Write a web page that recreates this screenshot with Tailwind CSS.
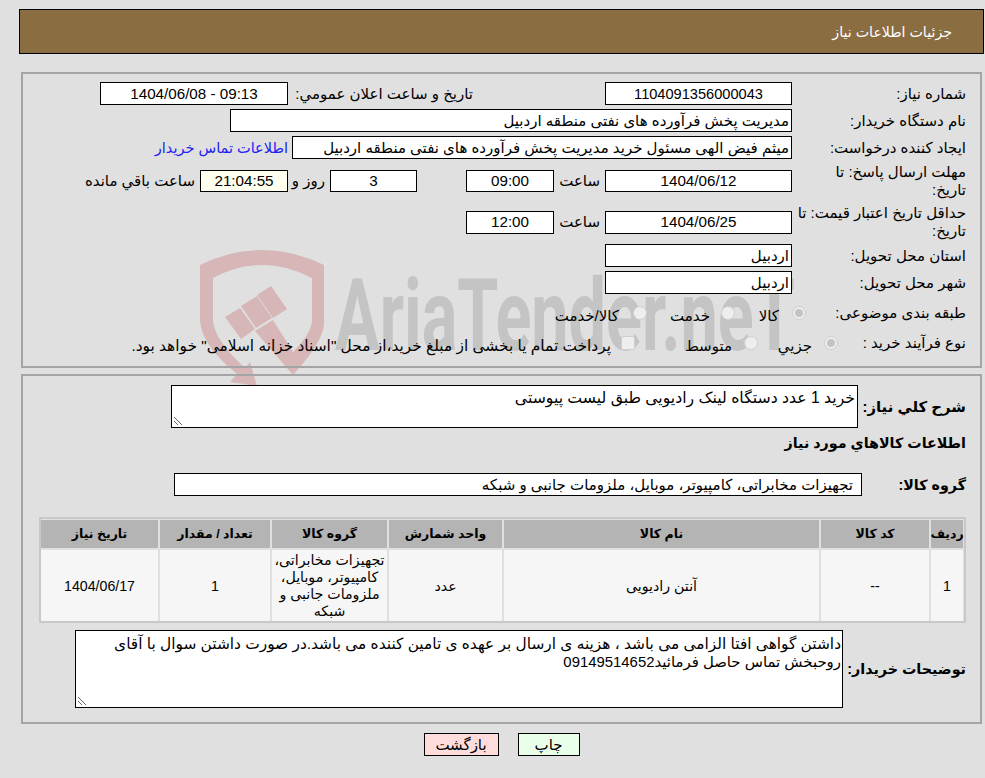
<!DOCTYPE html>
<html lang="fa" dir="rtl">
  <head>
    <meta charset="UTF-8" />
    <script src="https://cdn.jsdelivr.net/npm/@tailwindcss/browser@4"></script>
  </head>
  <body class="relative h-[778px] overflow-hidden bg-[#e0e0e0] text-[15px] leading-[18px] text-black font-['Liberation_Sans','DejaVu_Sans',sans-serif]">
    <!-- watermark -->
    <svg class="absolute left-[199px] top-[245px] z-0" width="130" height="145" viewBox="199 245 130 145">
      <path fill="#d6b6b6" d="M200 265 Q231 250 262 250 Q293 250 324 265 V325 Q322 343 293 375 V352 Q310 335 312 322 V278 Q288 265 262 265 Q236 265 213 278 V320 Q214 340 245 368 L250 362 L257 386 L230 382 L237 374 Q201 345 200 320 Z" />
      <path fill="#d6b6b6" d="M225 317 L240 308 L255 329 L241 339 Z M241 306 L257 296 L272 318 L256 328 Z M257 295 L271 286 L287 309 L273 318 Z M255 331 L273 320 L293 352 V375 Z" />
    </svg>
    <div class="absolute left-[335px] top-[256px] z-0 origin-top-left scale-x-[.665] whitespace-nowrap text-[100px] leading-[120px] font-bold text-[#c4c4c4] font-['Roboto',sans-serif]" dir="ltr">AriaTender.neT</div>

    <div class="relative z-10 pt-[9px] pr-[1px] pl-[19px]">
      <header class="flex h-[45px] items-center border border-black bg-[#8b6d42] pr-[31px] text-[14.2px] text-white">جزئيات اطلاعات نياز</header>

      <section class="mt-[18px] mx-[2px] h-[296px] border-2 border-[#a4a4a4] pt-[8px] pr-[14px]">
        <div class="flex h-[23px] items-center">
          <label class="w-[174px]">شماره نياز:</label>
          <div class="flex h-[23px] w-[187px] items-center justify-center border border-black bg-white text-[14.6px]">1104091356000043</div>
          <label class="mr-[132px] w-[185px] whitespace-nowrap">تاريخ و ساعت اعلان عمومي:</label>
          <div class="flex h-[23px] w-[188px] items-center justify-center border border-black bg-white text-[15.2px]" dir="ltr">1404/06/08 - 09:13</div>
        </div>
        <div class="mt-[4px] flex h-[23px] items-center">
          <label class="w-[174px]">نام دستگاه خريدار:</label>
          <div class="flex h-[23px] w-[562px] items-center border border-black bg-white pr-[2px]">مدیریت پخش فرآورده های نفتی منطقه اردبیل</div>
        </div>
        <div class="mt-[4px] flex h-[23px] items-center">
          <label class="w-[174px]">ايجاد کننده درخواست:</label>
          <div class="flex h-[23px] w-[500px] items-center whitespace-nowrap border border-black bg-white pr-[2px]">میثم فیض الهی مسئول خرید مدیریت پخش فرآورده های نفتی منطقه اردبیل</div>
          <a class="mr-[4px] whitespace-nowrap text-[14.5px] text-[#2020f0]">اطلاعات تماس خريدار</a>
        </div>
        <div class="mt-[4px] flex h-[36px] items-center">
          <label class="w-[174px]">مهلت ارسال پاسخ: تا<br />تاريخ:</label>
          <div class="flex h-[22px] w-[187px] items-center justify-center border border-black bg-white text-[15.2px]">1404/06/12</div>
          <span class="w-[51px] pr-[5px]">ساعت</span>
          <div class="flex h-[22px] w-[88px] items-center justify-center border border-black bg-white text-[15.2px]">09:00</div>
          <div class="mr-[49px] flex h-[22px] w-[87px] items-center justify-center border border-black bg-white text-[15.2px]">3</div>
          <span class="w-[42px] pr-[5px]">روز و</span>
          <div class="flex h-[22px] w-[88px] items-center justify-center border border-black bg-[#fffff0] text-[15.2px]">21:04:55</div>
          <span class="whitespace-nowrap pr-[5px]">ساعت باقي مانده</span>
        </div>
        <div class="mt-[5px] flex h-[36px] items-center">
          <label class="w-[174px] whitespace-nowrap">حداقل تاريخ اعتبار قيمت: تا<br />تاريخ:</label>
          <div class="flex h-[23px] w-[187px] items-center justify-center border border-black bg-white text-[15.2px]">1404/06/25</div>
          <span class="w-[51px] pr-[5px]">ساعت</span>
          <div class="flex h-[23px] w-[88px] items-center justify-center border border-black bg-white text-[15.2px]">12:00</div>
        </div>
        <div class="mt-[4px] flex h-[23px] items-center">
          <label class="w-[174px]">استان محل تحويل:</label>
          <div class="flex h-[23px] w-[187px] items-center border border-black bg-white pr-[2px]">اردبیل</div>
        </div>
        <div class="mt-[4px] flex h-[23px] items-center">
          <label class="w-[174px]">شهر محل تحويل:</label>
          <div class="flex h-[23px] w-[187px] items-center border border-black bg-white pr-[2px]">اردبیل</div>
        </div>
        <div class="mt-[8px] flex h-[22px] items-center">
          <label class="w-[160px] whitespace-nowrap">طبقه بندی موضوعی:</label>
          <span class="flex h-[14px] w-[14px] shrink-0 items-center justify-center rounded-full border border-[#cfcfcf] bg-[#eeeeee]"><span class="h-[8px] w-[8px] rounded-full bg-[#c4c4c4]"></span></span>
          <span class="mr-[13px] w-[44px] pt-[5px]">کالا</span>
          <span class="h-[14px] w-[14px] shrink-0 rounded-full border border-[#cfcfcf] bg-[#eeeeee]"></span>
          <span class="mr-[11px] w-[63px] pt-[5px]">خدمت</span>
          <span class="h-[14px] w-[14px] shrink-0 rounded-full border border-[#cfcfcf] bg-[#eeeeee]"></span>
          <span class="mr-[14px] pt-[5px]">کالا/خدمت</span>
        </div>
        <div class="mt-[8px] flex h-[22px] items-center">
          <label class="w-[128px] whitespace-nowrap">نوع فرآيند خريد :</label>
          <span class="flex h-[14px] w-[14px] shrink-0 items-center justify-center rounded-full border border-[#cfcfcf] bg-[#eeeeee]"><span class="h-[8px] w-[8px] rounded-full bg-[#c4c4c4]"></span></span>
          <span class="mr-[12px] w-[54px] pt-[5px]">جزيي</span>
          <span class="h-[14px] w-[14px] shrink-0 rounded-full border border-[#cfcfcf] bg-[#eeeeee]"></span>
          <span class="mr-[12px] w-[97px] pt-[5px]">متوسط</span>
          <span class="h-[14px] w-[14px] shrink-0 rounded-[2px] border border-[#cfcfcf] bg-[#eeeeee]"></span>
          <span class="mr-[10px] whitespace-nowrap pt-[5px] text-[15.4px]">پرداخت تمام يا بخشی از مبلغ خريد،از محل "اسناد خزانه اسلامی" خواهد بود.</span>
        </div>
      </section>

      <section class="mt-[6px] mx-[2px] h-[350px] border-2 border-[#a4a4a4] pt-[9px] pr-[14px]">
        <div class="flex h-[43px] items-center">
          <label class="w-[108px] whitespace-nowrap text-[14.9px] font-bold">شرح كلي نياز:</label>
          <div class="relative h-[43px] w-[687px] border border-black bg-white pr-[2px] pt-[3px] text-[15.7px]">خرید 1 عدد دستگاه لینک رادیویی طبق لیست پیوستی
            <svg class="absolute bottom-[1px] left-[1px]" width="10" height="10" viewBox="0 0 10 10"><path stroke="#666" stroke-width="1" d="M1 1 L9 9 M1 5 L5 9" /></svg>
          </div>
        </div>
        <div class="mt-[3px] h-[24px] text-[14.3px] font-bold leading-[24px]">اطلاعات كالاهاي مورد نياز</div>
        <div class="mt-[18px] flex h-[23px] items-center">
          <label class="w-[104px] text-[14.3px] font-bold">گروه كالا:</label>
          <div class="flex h-[23px] w-[688px] items-center border border-black bg-white pr-[8px]">تجهیزات مخابراتی، کامپیوتر، موبایل، ملزومات جانبی و شبکه</div>
        </div>
        <div class="mt-[21px] w-[927px] border-2 border-[#c8c8c8] pt-[1px] pr-[1px]">
          <div class="grid grid-cols-[32px_108px_315px_113px_115px_110px_117px] gap-[2px] text-center text-[14.2px]">
            <div class="flex h-[28px] items-center justify-center bg-[#b4b4b4] text-[12.5px] font-bold">رديف</div>
            <div class="flex h-[28px] items-center justify-center bg-[#b4b4b4] text-[12.5px] font-bold">کد کالا</div>
            <div class="flex h-[28px] items-center justify-center bg-[#b4b4b4] text-[12.5px] font-bold">نام کالا</div>
            <div class="flex h-[28px] items-center justify-center bg-[#b4b4b4] text-[12.5px] font-bold">واحد شمارش</div>
            <div class="flex h-[28px] items-center justify-center bg-[#b4b4b4] text-[12.5px] font-bold">گروه کالا</div>
            <div class="flex h-[28px] items-center justify-center bg-[#b4b4b4] text-[12.5px] font-bold">تعداد / مقدار</div>
            <div class="flex h-[28px] items-center justify-center bg-[#b4b4b4] text-[12.5px] font-bold">تاريخ نياز</div>
            <div class="flex h-[71px] items-center justify-center bg-[#f6f6f6]">1</div>
            <div class="flex h-[71px] items-center justify-center bg-[#f6f6f6]">--</div>
            <div class="flex h-[71px] items-center justify-center bg-[#f6f6f6]">آنتن رادیویی</div>
            <div class="flex h-[71px] items-center justify-center bg-[#f6f6f6]">عدد</div>
            <div class="flex h-[71px] items-center justify-center whitespace-nowrap bg-[#f6f6f6] leading-[17px]"><span>تجهیزات مخابراتی،<br />کامپیوتر، موبایل،<br />ملزومات جانبی و<br />شبکه</span></div>
            <div class="flex h-[71px] items-center justify-center bg-[#f6f6f6]">1</div>
            <div class="flex h-[71px] items-center justify-center bg-[#f6f6f6]">1404/06/17</div>
          </div>
        </div>
        <div class="mt-[7px] flex h-[78px] items-center">
          <label class="w-[123px] whitespace-nowrap text-[14.3px] font-bold">توضيحات خريدار:</label>
          <div class="relative h-[78px] w-[768px] border border-black bg-white pr-[1px] pt-[4px]">
            <span class="text-[15.4px]">داشتن گواهی افتا الزامی می باشد ، هزینه ی ارسال بر عهده ی تامین کننده می باشد.در صورت داشتن سوال با آقای</span><br />
            <span class="text-[14.9px]">روحبخش تماس حاصل فرمائید09149514652</span>
            <svg class="absolute bottom-[1px] left-[1px]" width="10" height="10" viewBox="0 0 10 10"><path stroke="#666" stroke-width="1" d="M1 1 L9 9 M1 5 L5 9" /></svg>
          </div>
        </div>
      </section>

      <div class="mt-[9px] flex h-[23px] justify-center gap-[19px]">
        <button class="w-[62px] border border-black bg-[#e9ffe9]">چاپ</button>
        <button class="w-[75px] border border-black bg-[#ffdcdc]">بازگشت</button>
      </div>
    </div>
  </body>
</html>
